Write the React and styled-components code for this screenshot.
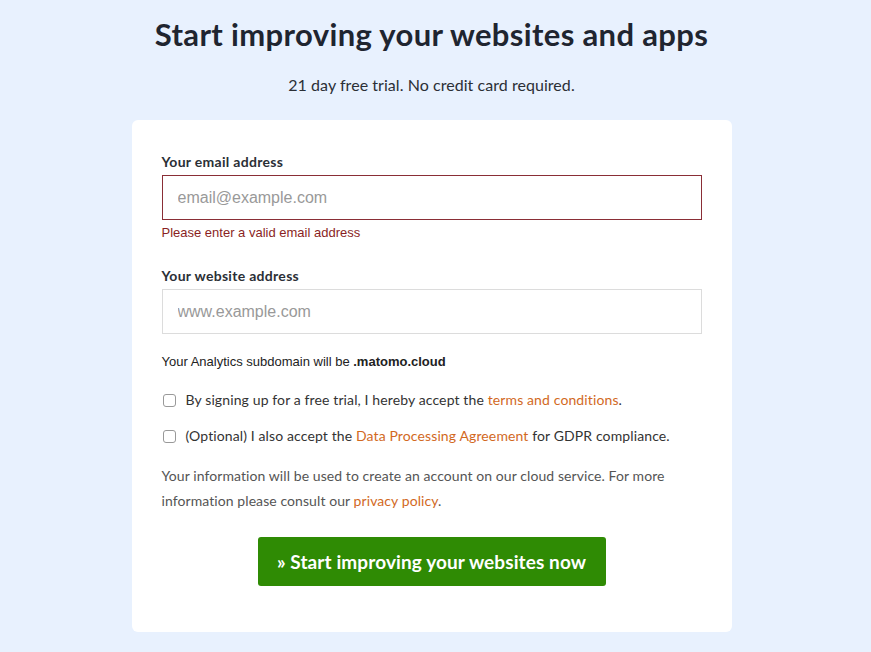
import React from "react";
import styled, { createGlobalStyle } from "styled-components";

const Global = createGlobalStyle`
  html, body { margin: 0; padding: 0; }
  body { background: #e8f1fe; font-family: Lato, "Noto Sans", sans-serif; color: #212529; }
`;

const Page = styled.div`
  display: flex;
  flex-direction: column;
  align-items: center;
  padding: 14px 8px 0 0;
  min-height: 652px;
  box-sizing: border-box;
`;

const Title = styled.h1`
  margin: 0;
  font-size: 31px;
  font-weight: 700;
  color: #1f2530;
  letter-spacing: 0.35px;
  line-height: 40px;
`;

const Subtitle = styled.p`
  margin: 20px 0 0;
  font-size: 16px;
  color: #2b2f36;
  line-height: 22px;
  letter-spacing: 0.05px;
`;

const Card = styled.form`
  margin-top: 24px;
  width: 600px;
  box-sizing: border-box;
  background: #fff;
  border-radius: 6px;
  padding: 33px 30px 46px;
  display: flex;
  flex-direction: column;
`;

const Label = styled.label`
  font-size: 14px;
  font-weight: 700;
  color: #2b2f36;
  line-height: 18px;
  letter-spacing: 0.3px;
  margin-bottom: 4px;
  margin-top: ${(p) => p.$top || 0}px;
`;

const Input = styled.input`
  height: 45px;
  box-sizing: border-box;
  width: 100%;
  border: 1px solid ${(p) => (p.$error ? "#8a2e36" : "#dcdcdc")};
  padding: 0 15px;
  font-family: "Liberation Sans", Arial, sans-serif;
  font-size: 16px;
  color: #333;
  outline: none;
  &::placeholder { color: #999; }
`;

const ErrorText = styled.div`
  font-family: "Liberation Sans", Arial, sans-serif;
  font-size: 13px;
  color: #8a1f24;
  margin-top: 5px;
  line-height: 15px;
`;

const Hint = styled.div`
  font-family: "Liberation Sans", Arial, sans-serif;
  font-size: 13px;
  color: #222;
  margin-top: 20px;
  line-height: 15px;
  b { font-weight: 700; }
`;

const CheckRow = styled.label`
  display: flex;
  align-items: center;
  gap: 10px;
  font-size: 14px;
  color: #333;
  line-height: 18px;
  letter-spacing: 0.12px;
  margin-top: ${(p) => p.$top}px;
`;

const Box = styled.span`
  width: 13px;
  height: 13px;
  border: 1px solid #999;
  border-radius: 3px;
  box-sizing: border-box;
  flex: none;
  margin-left: 1px;
`;

const Link = styled.a`
  color: #d2691e;
  text-decoration: none;
`;

const Info = styled.p`
  margin: 18px 0 0;
  font-size: 14px;
  line-height: 25px;
  letter-spacing: 0.08px;
  color: #555;
`;

const ButtonRow = styled.div`
  display: flex;
  justify-content: center;
  margin-top: 24px;
`;

const Button = styled.button`
  width: 348px;
  height: 49px;
  border: none;
  border-radius: 3px;
  background: #2f8b04;
  color: #fff;
  font-family: Lato, "Noto Sans", sans-serif;
  font-size: 19px;
  font-weight: 700;
  letter-spacing: 0.1px;
  cursor: pointer;
`;

export default function App() {
  return (
    <>
      <Global />
      <Page>
        <Title>Start improving your websites and apps</Title>
        <Subtitle>21 day free trial. No credit card required.</Subtitle>
        <Card onSubmit={(e) => e.preventDefault()}>
          <Label>Your email address</Label>
          <Input $error placeholder="email@example.com" />
          <ErrorText>Please enter a valid email address</ErrorText>
          <Label $top={27}>Your website address</Label>
          <Input placeholder="www.example.com" />
          <Hint>
            Your Analytics subdomain will be <b>.matomo.cloud</b>
          </Hint>
          <CheckRow $top={22}>
            <Box />
            <span>
              By signing up for a free trial, I hereby accept the{" "}
              <Link href="#">terms and conditions</Link>.
            </span>
          </CheckRow>
          <CheckRow $top={18}>
            <Box />
            <span>
              (Optional) I also accept the <Link href="#">Data Processing Agreement</Link> for GDPR
              compliance.
            </span>
          </CheckRow>
          <Info>
            Your information will be used to create an account on our cloud service. For more
            information please consult our <Link href="#">privacy policy</Link>.
          </Info>
          <ButtonRow>
            <Button type="submit">» Start improving your websites now</Button>
          </ButtonRow>
        </Card>
      </Page>
    </>
  );
}
